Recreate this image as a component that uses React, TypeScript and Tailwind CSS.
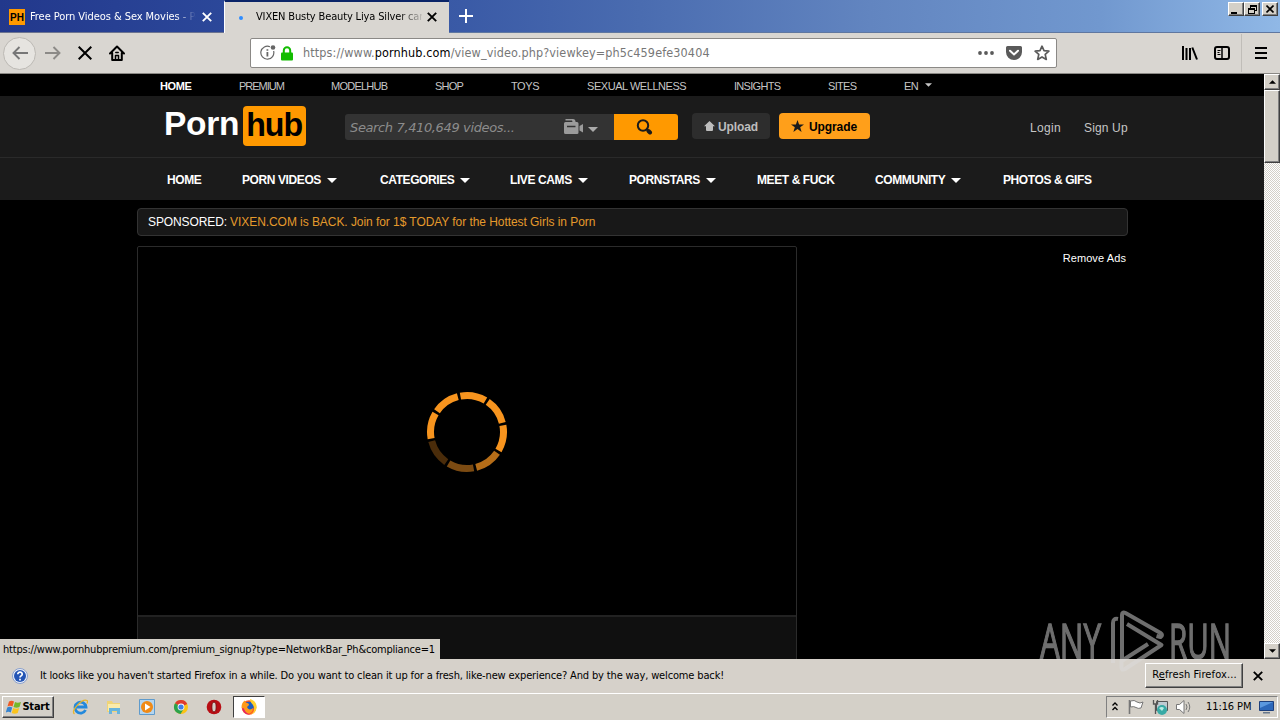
import { ReactNode } from 'react'

const TAHOMA = 'font-["DejaVu_Sans_Condensed","DejaVu_Sans",sans-serif]'

const networkLinks = [
  { label: 'HOME', width: 'w-[79px]', text: 'font-bold text-white tracking-[-0.35px]' },
  { label: 'PREMIUM', width: 'w-[92px]', text: 'tracking-[-1px]' },
  { label: 'MODELHUB', width: 'w-[104px]', text: 'tracking-[-0.75px]' },
  { label: 'SHOP', width: 'w-[76px]', text: 'tracking-[-0.8px]' },
  { label: 'TOYS', width: 'w-[76px]', text: 'tracking-[-0.4px]' },
  { label: 'SEXUAL WELLNESS', width: 'w-[147px]', text: 'tracking-[-0.45px]' },
  { label: 'INSIGHTS', width: 'w-[94px]', text: 'tracking-[-0.7px]' },
  { label: 'SITES', width: 'w-[76px]', text: 'tracking-[-0.7px]' },
]

const menuLinks = [
  { label: 'HOME', width: 'w-[75px]', arrow: false },
  { label: 'PORN VIDEOS', width: 'w-[138px]', arrow: true },
  { label: 'CATEGORIES', width: 'w-[130px]', arrow: true },
  { label: 'LIVE CAMS', width: 'w-[119px]', arrow: true },
  { label: 'PORNSTARS', width: 'w-[128px]', arrow: true },
  { label: 'MEET & FUCK', width: 'w-[118px]', arrow: false },
  { label: 'COMMUNITY', width: 'w-[128px]', arrow: true },
  { label: 'PHOTOS & GIFS', width: 'w-[120px]', arrow: false },
]

// clockwise from the top segment
const spinnerSegments = ['#f7941e', '#f7941e', '#f7941e', '#b56d18', '#7c4b12', '#4a2c0a', '#f7941e', '#f7941e']

function Caret({ className }: { className: string }) {
  return (
    <svg viewBox="0 0 10 5" className={className}>
      <path d="M0 0h10L5 5z" fill="currentColor" />
    </svg>
  )
}

function CloseIcon({ className }: { className: string }) {
  return (
    <svg viewBox="0 0 10 10" className={className} fill="none" stroke="currentColor" strokeWidth="1.9">
      <path d="M.8.8l8.4 8.4M9.2.8L.8 9.2" />
    </svg>
  )
}

function WinButton({ children, className = '' }: { children: ReactNode; className?: string }) {
  return (
    <div
      className={`flex items-center justify-center bg-[#d4d0c8] border border-t-white border-l-white border-r-[#404040] border-b-[#404040] shadow-[inset_-1px_-1px_0_#808080] ${className}`}
    >
      {children}
    </div>
  )
}

function TabBar() {
  return (
    <div className="flex h-[33px] bg-[linear-gradient(90deg,#22388c_0%,#2c489a_18%,#3a5aa6_36%,#4a6cb0_50%,#6285c0_68%,#7198cf_86%,#90b8e6_100%)]">
      <div className="flex w-[224px] items-center border-b border-[#6b7390] pt-[2px] pl-[9px] text-white">
        <div className="flex h-4 w-4 items-center justify-center bg-[#ff9900] font-['Liberation_Sans',sans-serif] text-[10px] font-bold text-black">
          PH
        </div>
        <div className="ml-[5px] w-[166px] overflow-hidden whitespace-nowrap text-[11px] tracking-[-0.06px] [mask-image:linear-gradient(90deg,black_88%,transparent_100%)]">
          Free Porn Videos &amp; Sex Movies - Pornhub
        </div>
        <CloseIcon className="ml-[6px] h-[10px] w-[10px]" />
      </div>
      <div className="flex w-[225px] items-center border-t-2 border-l border-t-[#0a2468] border-l-white bg-[#d9d6d1] text-black">
        <div className="ml-[14px] h-1 w-1 rounded-full bg-[#2f8cff]" />
        <div className="ml-[13px] w-[166px] overflow-hidden whitespace-nowrap text-[11px] tracking-[-0.15px] [mask-image:linear-gradient(90deg,black_86%,transparent_102%)]">
          VIXEN Busty Beauty Liya Silver can't get enough
        </div>
        <CloseIcon className="mb-[2px] ml-[5px] h-[10px] w-[10px]" />
      </div>
      <div className="flex flex-1 justify-between border-b border-[#5f77a0]">
        <svg viewBox="0 0 14 14" className="mt-[9px] ml-[10px] h-[14px] w-[14px]" stroke="white" strokeWidth="2">
          <path d="M7 0v14M0 7h14" />
        </svg>
        <div className="mt-[2px] mr-[2px] flex h-[14px]">
          <WinButton className="w-4">
            <div className="mt-[7px] mr-1 h-[2px] w-[6px] bg-black" />
          </WinButton>
          <WinButton className="w-4">
            <svg viewBox="0 0 9 9" className="h-[9px] w-[9px]" fill="none" stroke="black" shapeRendering="crispEdges">
              <path d="M2.5 3.5v-3h6v5h-2M2 1h7M.5 3.5h6v5h-6zM0 4h7" />
            </svg>
          </WinButton>
          <WinButton className="ml-[2px] w-4">
            <svg viewBox="0 0 8 8" className="h-2 w-2" stroke="black" strokeWidth="1.6">
              <path d="M.5.5l7 7M7.5.5l-7 7" />
            </svg>
          </WinButton>
        </div>
      </div>
    </div>
  )
}

function Toolbar() {
  return (
    <div className="flex h-[41px] items-center border-b border-[#8a8884] bg-[#d9d6d1]">
      <div className="ml-[3px] flex h-[33px] w-[33px] items-center justify-center rounded-full border border-[#bcb9b4] bg-[#e6e4e0] text-[#777]">
        <svg viewBox="0 0 16 14" className="h-[14px] w-4" fill="none" stroke="currentColor" strokeWidth="1.9">
          <path d="M16 7H1.5M7.5 1L1.5 7l6 6" />
        </svg>
      </div>
      <svg viewBox="0 0 16 14" className="ml-[9px] h-[14px] w-4 text-[#8c8a87]" fill="none" stroke="currentColor" strokeWidth="1.9">
        <path d="M0 7h14.5M8.500 1l6 6-6 6" />
      </svg>
      <svg viewBox="0 0 14 14" className="ml-[17px] h-[14px] w-[14px]" stroke="black" strokeWidth="2">
        <path d="M.7.7l12.600 12.600M13.300.7L.7 13.300" />
      </svg>
      <svg viewBox="0 0 16 16" className="ml-[17px] h-4 w-4" fill="none" stroke="black" strokeWidth="2" strokeLinejoin="round" strokeLinecap="round">
        <path d="M1 8.500L8 1.500l7 7M3.200 8v7h9.600V8" />
        <path d="M6.500 15v-4.500h3V15zM6.800 7.500h2.400" strokeWidth="1.500" />
      </svg>
      <div className="ml-[125px] flex h-[30px] w-[807px] items-center rounded-[2px] border border-[#8b8986] bg-white">
        <svg viewBox="0 0 16 16" className="ml-[9px] h-4 w-4" fill="none" stroke="#666" strokeWidth="1.200">
          <path d="M10 1.800A6.500 6.500 0 1 0 13.600 6" />
          <path d="M7.400 7v4.500M7.400 4.200v1.500" strokeWidth="1.800" />
          <circle cx="13" cy="2.500" r="2.300" fill="#666" stroke="none" />
        </svg>
        <svg viewBox="0 0 12 15" className="ml-[5px] h-[15px] w-3">
          <path d="M2.800 7V4.500a3.200 3.200 0 0 1 6.400 0V7" fill="none" stroke="#12bc00" strokeWidth="2" />
          <rect y="6.500" width="12" height="8" rx="1" fill="#12bc00" />
        </svg>
        <div className="ml-[10px] w-[660px] pt-px whitespace-nowrap text-[12.5px] tracking-[0.12px] text-[#777]">
          https://www.<span className="text-black">pornhub.com</span>/view_video.php?viewkey=ph5c459efe30404
        </div>
        <svg viewBox="0 0 16 4" className="ml-[15px] h-1 w-4 shrink-0" fill="#5a5a5a">
          <circle cx="2" cy="2" r="1.900" />
          <circle cx="8" cy="2" r="1.900" />
          <circle cx="14" cy="2" r="1.900" />
        </svg>
        <svg viewBox="0 0 16 14" className="ml-3 h-[14px] w-4 shrink-0">
          <path d="M1.500 0h13A1.500 1.500 0 0 1 16 1.500V6A8 8 0 0 1 0 6V1.500A1.500 1.500 0 0 1 1.500 0z" fill="#5a5a5a" />
          <path d="M4 4.800l4 3.700 4-3.700" fill="none" stroke="white" strokeWidth="2" strokeLinecap="round" />
        </svg>
        <svg viewBox="0 0 16 16" className="ml-3 h-4 w-4 shrink-0" fill="none" stroke="#5a5a5a" strokeWidth="1.700" strokeLinejoin="round">
          <path d="M8 1.200l2 4.500 4.900.5-3.700 3.200 1.100 5L8 11.900l-4.300 2.500 1.100-5L1.100 6.200 6 5.700z" />
        </svg>
      </div>
      <svg viewBox="0 0 16 14" className="ml-[125px] h-[14px] w-4" stroke="black" strokeWidth="2">
        <path d="M1 0v14M4.500 2v12M8 2v12M10.300 1.500l4.700 12" />
      </svg>
      <svg viewBox="0 0 16 14" className="ml-4 h-[14px] w-4" fill="none" stroke="black" strokeWidth="2">
        <rect x="1" y="1" width="14" height="12" rx="2" />
        <path d="M8 1v12" strokeWidth="1.500" />
        <path d="M3.500 4.500h3M3.500 6.500h2M3.500 8.500h3" strokeWidth="1" />
      </svg>
      <div className="ml-[11px] h-[38px] w-px bg-[#c0bdb8]" />
      <svg viewBox="0 0 12 12" className="ml-[13px] h-3 w-3" stroke="black" strokeWidth="2">
        <path d="M0 1h12M0 6h12M0 11h12" />
      </svg>
    </div>
  )
}

function SiteHeader() {
  return (
    <div>
      <div className="flex h-[22px] items-center bg-black pt-[2px] pl-[160px] text-[11px] text-[#c6c6c6]">
        {networkLinks.map((link) => (
          <div key={link.label} className={`shrink-0 whitespace-nowrap ${link.width} ${link.text}`}>
            {link.label}
          </div>
        ))}
        <span className="tracking-[-0.5px]">EN</span>
        <Caret className="mb-[2px] ml-[7px] h-1 w-[7px]" />
      </div>

      <div className="flex h-[62px] items-start border-b border-[#2a2a2a] bg-[#1b1b1b] pl-[164px]">
        <div className="mt-[10px] flex h-10 items-center">
          <div className="w-[79px] text-[33.500px] leading-10 font-bold tracking-[-0.3px] text-white">
            <span className="inline-block origin-left -translate-y-[2px] scale-x-[1]">Porn</span>
          </div>
          <div className="flex h-10 w-[63px] items-center justify-center rounded-[4px] bg-[#ff9900] text-[33.500px] font-bold tracking-[-1px] text-black">
            <span className="inline-block -translate-y-px scale-x-[0.96]">hub</span>
          </div>
        </div>
        <div className="mt-[18px] ml-[39px] flex h-[26px] w-[333px]">
          <div className="flex w-[269px] items-center rounded-l-[3px] bg-[#333] text-[#8c8c8c]">
            <div className='w-[219px] pt-px pl-[5px] font-["DejaVu_Sans","DejaVu_Sans_Condensed",sans-serif] text-[13px] font-extralight italic tracking-[-0.37px]'>
              Search 7,410,649 videos...
            </div>
            <svg viewBox="0 0 20 16" className="h-4 w-5 text-[#9b9b9b]" fill="currentColor">
              <path d="M1.500 0H9q2 0 2.500 2v1H13a1.500 1.500 0 0 1 1.500 1.500v9A1.500 1.500 0 0 1 13 15H1.500A1.500 1.500 0 0 1 0 13.500v-9A1.500 1.500 0 0 1 1.500 3H8.500L8 1.500H1.500zM15.500 7l3.500-2v8.500l-3.500-2z" />
              <path d="M3 7.500h8.500" stroke="#333" strokeWidth="1.500" />
            </svg>
            <Caret className="mt-1 ml-[4px] h-[5px] w-[10px] text-[#aaa]" />
          </div>
          <div className="flex w-16 items-center justify-center rounded-r-[3px] bg-[#ff9900]">
            <svg viewBox="0 0 17 16" className="h-4 w-[17px] -translate-x-[2px]" fill="none" stroke="#1b1b1b">
              <circle cx="7" cy="6.500" r="5.200" strokeWidth="2" />
              <path d="M10.500 10l1.500 1.500" strokeWidth="2" />
              <path d="M12.500 12l1.500 1.500" strokeWidth="4" strokeLinecap="round" />
            </svg>
          </div>
        </div>
        <div className="mt-[17px] ml-[14px] flex h-[26px] w-[78px] items-center rounded-[4px] bg-[#2d2d2d] pl-3 text-[12px] font-bold text-[#bdbdbd]">
          <svg viewBox="0 0 11 10" className="mr-[3px] h-[10px] w-[11px]" fill="currentColor">
            <path d="M5.500 0L11 5.200H9V9a1 1 0 0 1-1 1H3a1 1 0 0 1-1-1V5.200H0z" />
          </svg>
          <span className="pt-px tracking-[-0.1px]">Upload</span>
        </div>
        <div className="mt-[17px] ml-[9px] flex h-[26px] w-[91px] items-center rounded-[4px] bg-[#ff9f1a] pl-3 text-[12px] font-bold text-black">
          <svg viewBox="0 0 13 12" className="mr-[5px] h-3 w-[13px]" fill="#1b1b1b">
            <path d="M6.500 0l1.600 4.400H13L9.200 7.200l1.400 4.800-4.100-2.900L2.400 12l1.400-4.800L0 4.400h4.900z" />
          </svg>
          <span className="pt-px tracking-[-0.1px]">Upgrade</span>
        </div>
        <div className="mt-[22px] ml-[160px] flex text-[12px] leading-5 text-[#c6c6c6]">
          <div className="w-[54px] tracking-[0.3px]">Login</div>
          <div className="whitespace-nowrap tracking-[0.15px]">Sign Up</div>
        </div>
      </div>

      <div className="flex h-[42px] items-center bg-[#1b1b1b] pt-[2px] pl-[167px] text-[12px] font-bold text-white">
        {menuLinks.map((link) => (
          <div key={link.label} className={`flex shrink-0 items-center whitespace-nowrap tracking-[-0.4px] ${link.width}`}>
            {link.label}
            {link.arrow && <Caret className="ml-[6px] h-[5px] w-[10px]" />}
          </div>
        ))}
      </div>
    </div>
  )
}

function Spinner() {
  return (
    <svg viewBox="-41 -41 82 82" className="h-[82px] w-[82px] translate-y-px" fill="none" strokeWidth="7">
      {spinnerSegments.map((color, i) => (
        <path key={i} d="M-12.700 -34.200A36.500 36.500 0 0 1 12.700 -34.200" stroke={color} transform={`rotate(${i * 45 + 10})`} />
      ))}
    </svg>
  )
}

function AnyRun() {
  return (
    <div className="pointer-events-none absolute top-[609px] left-[1039px] opacity-50">
      <svg viewBox="0 0 192 64" className="h-16 w-48" fill="none" stroke="#dcdcdc">
        <g fill="#dcdcdc" strokeWidth="1.400" fontFamily="'Open Sans', 'Liberation Sans', sans-serif" fontSize="50">
          <text x="1" y="50" textLength="61" lengthAdjust="spacingAndGlyphs">ANY</text>
          <text x="130" y="50" textLength="62" lengthAdjust="spacingAndGlyphs">RUN</text>
        </g>
        <g strokeWidth="4" strokeLinejoin="round">
          <path d="M83 52V6q0-3.500 3.500-2l35 20q3 2 0 4l-4-1" />
          <path d="M88 15l34.500 21L86 60q-4 2-3.500-2.500V52L109 35" />
          <path d="M79 10q-5-1-5 4v40" />
        </g>
      </svg>
    </div>
  )
}

function Scrollbar() {
  return (
    <div className="flex w-4 flex-col bg-[repeating-conic-gradient(#fff_0_25%,#d4d0c8_0_50%)] bg-[length:2px_2px]">
      <WinButton className="h-4">
        <Caret className="h-1 w-[7px] rotate-180" />
      </WinButton>
      <WinButton className="h-[73px]">{null}</WinButton>
      <WinButton className="mt-auto h-4">
        <Caret className="h-1 w-[7px]" />
      </WinButton>
    </div>
  )
}

function NotificationBar() {
  return (
    <div className="flex h-[34px] items-center bg-[#d6d1ca] text-[11px] text-black">
      <svg viewBox="0 0 16 16" className="ml-3 h-4 w-4">
        <circle cx="8" cy="8" r="7.500" fill="#e9eef8" stroke="#8aa0cc" />
        <circle cx="8" cy="8" r="6" fill="#2455b5" />
        <path d="M5.800 6.300c0-3 4.500-2.800 4.400 0C10.200 8 8 7.800 8 9.500M8 10.800v1.700" fill="none" stroke="white" strokeWidth="1.700" />
      </svg>
      <div className="ml-[12px] w-[1105px] pt-px whitespace-nowrap tracking-[-0.145px]">
        It looks like you haven't started Firefox in a while. Do you want to clean it up for a fresh, like-new experience? And by the way, welcome back!
      </div>
      <WinButton className="mb-[2px] h-[25px] w-[98px] shrink-0">
        <span className="whitespace-nowrap pl-px tracking-[0.1px]">
          R<u>e</u>fresh Firefox...
        </span>
      </WinButton>
      <CloseIcon className="ml-[10px] h-[10px] w-[10px]" />
    </div>
  )
}

function FirefoxIcon() {
  return (
    <svg viewBox="0 0 16 16" className="h-4 w-4">
      <circle cx="8" cy="8.500" r="7.300" fill="#ff5a1f" />
      <circle cx="8" cy="7.500" r="4.800" fill="#1c5ec4" />
      <path d="M1 5c1-2 2-3 2.500-3.500L5 4c2 0 3 .5 3 2L6 8c1 3 4 3 6 1 0 4-3 6-6 5.500C2 14 0 9 1 5z" fill="#ff9a1a" />
      <path d="M9 0c4 1 7 4 6.500 9-.5 4-3 6-6 6.500 3-2 4-4 3.500-7C12.500 5 9 4 9 0z" fill="#ffd22e" />
      <path d="M1 9c1 5 5 7 9 6.500-3-.5-6-2-7-6z" fill="#e3206c" />
    </svg>
  )
}

function Taskbar() {
  return (
    <div className="flex h-[27px] items-center border-t border-white bg-[#d4d0c8] text-[11px] text-black">
      <WinButton className="ml-[2px] h-[22px] w-[52px]">
        <svg viewBox="0 0 16 14" className="h-[14px] w-4 shrink-0">
          <path d="M3 1.500q2.500-1.500 5 0L6.500 6.500q-2.500-1.300-5 0z" fill="#ef5a23" />
          <path d="M9 2q2.500 1.300 6 0l-1.500 5q-3 1.300-6 0z" fill="#76b82a" />
          <path d="M1.200 7.500q2.500-1.300 5 0L4.800 12.500q-2.500-1.300-5 0z" fill="#3684d0" />
          <path d="M7.200 8q3 1.300 6 0l-1.500 5q-3 1.300-6 0z" fill="#fbc41d" />
        </svg>
        <span className="text-[11px] font-bold tracking-[-0.2px]">Start</span>
      </WinButton>
      <div className="ml-[18px] flex items-center gap-[17.5px]">
        <svg viewBox="0 0 16 16" className="h-4 w-4" fill="none">
          <path d="M13.500 11A5.500 5.500 0 1 1 14 8H4" stroke="#2389dc" strokeWidth="2.800" />
          <path d="M2.500 15C-2 12 10-.5 15 1.500q1 .5 0 3" stroke="#e6b52c" strokeWidth="1.300" />
        </svg>
        <svg viewBox="0 0 16 16" className="h-4 w-4">
          <path d="M1 2h5l1 2h7v9H1z" fill="#efd477" />
          <path d="M2 5h12v7H2z" fill="#f9ebab" />
          <path d="M3 9h11v6h-3v-3H6v3H3z" fill="#67b4dc" />
        </svg>
        <svg viewBox="0 0 16 16" className="h-4 w-4">
          <path d="M.5.5h15v15H.5z" fill="#b4d5ef" stroke="#5f9bcc" />
          <circle cx="8" cy="8" r="6" fill="#f08a16" />
          <path d="M6 4.500v7L11.500 8z" fill="white" />
        </svg>
        <svg viewBox="0 0 16 16" className="h-4 w-4">
          <circle cx="8" cy="8" r="7" fill="#fbc316" />
          <path d="M8 8L2 4.300a7 7 0 0 1 12.200.7z" fill="#df3b30" />
          <path d="M8 8L2 4.300A7 7 0 0 0 7.500 15L11 9.500z" fill="#2ba24c" />
          <circle cx="8" cy="8" r="3.400" fill="white" />
          <circle cx="8" cy="8" r="2.600" fill="#3f7fe8" />
        </svg>
        <svg viewBox="0 0 16 16" className="h-4 w-4">
          <circle cx="8" cy="8" r="7.300" fill="#b80e14" />
          <ellipse cx="8" cy="8" rx="2.200" ry="5" fill="#d4d0c8" stroke="#7d080c" />
        </svg>
      </div>
      <div className="ml-[11px] flex h-[22px] w-8 items-center justify-center border border-t-[#404040] border-l-[#404040] border-r-white border-b-white bg-white">
        <FirefoxIcon />
      </div>
      <div className="mr-[2px] ml-auto flex h-[22px] w-[172px] items-center border border-t-[#808080] border-l-[#808080] border-r-white border-b-white">
        <svg viewBox="0 0 6 9" className="mb-[2px] ml-[5px] h-[9px] w-[6px]" fill="none" stroke="black" strokeWidth="1.300">
          <path d="M.5 3.500L3 1l2.500 2.500M.5 8L3 5.500 5.500 8" />
        </svg>
        <svg viewBox="0 0 16 16" className="ml-[10px] h-4 w-4" fill="white" stroke="#777">
          <path d="M2.500 2q4-1.500 6.500 1 3 2 6 0l-2 6q-3 1-5-.5-2-1.500-5.500-.5z" />
          <path d="M1.500 1v14" strokeWidth="1.600" />
        </svg>
        <svg viewBox="0 0 16 16" className="ml-2 h-4 w-4">
          <path d="M4.500 2.500h11v9h-11z" fill="#bfcbd2" stroke="#555" />
          <path d="M1.500 1v4h4V1M3.500 5v10" fill="none" stroke="#555" strokeWidth="1.300" />
          <circle cx="10" cy="11" r="5" fill="#38aaa5" />
          <path d="M7 9q3-2 5 0l-2 3z" fill="#b9ece4" />
        </svg>
        <svg viewBox="0 0 16 16" className="ml-2 h-4 w-4" fill="none" stroke="#777">
          <path d="M.5 5.500h3L8 1.500v13L3.500 10.500h-3z" fill="white" />
          <path d="M10 5q2 3 0 6M12 3q3.500 5 0 10" />
        </svg>
        <span className="ml-[14px] w-[46px] pt-px whitespace-nowrap tracking-[-0.1px]">11:16 PM</span>
        <svg viewBox="0 0 15 13" className="ml-[7px] h-[13px] w-[15px] shrink-0">
          <path d="M.5.500h14v9H.5z" fill="#2c68ba" stroke="#1c3f7c" />
          <path d="M1 1h13L1 7z" fill="#5a98df" />
          <path d="M4 11h7v1.500H4z" fill="#68788c" />
        </svg>
      </div>
    </div>
  )
}

export default function App() {
  return (
    <div className={`relative flex h-[720px] w-[1280px] flex-col overflow-hidden bg-black ${TAHOMA}`}>
      <TabBar />
      <Toolbar />
      <div className="flex h-[585px]">
        <div className="w-[1264px] overflow-hidden font-['Liberation_Sans',Arial,sans-serif]">
          <SiteHeader />
          <div className="mt-2 ml-[137px] w-[991px]">
            <div className="flex h-7 items-center rounded-[4px] border border-[#333] bg-[#181818] pl-[10px] text-[12px] text-white">
              <span className="tracking-[-0.1px]">SPONSORED:</span>
              <span className="ml-[3px] tracking-[-0.06px] text-[#e59a2c]">
                VIXEN.COM is BACK. Join for 1$ TODAY for the Hottest Girls in Porn
              </span>
            </div>
            <div className="mt-[10px] flex justify-between">
              <div className="w-[660px] rounded-t-[2px] border border-[#2b2b2b]">
                <div className="flex h-[368px] items-center justify-center">
                  <Spinner />
                </div>
                <div className="h-[50px] border-t-2 border-[#222] bg-[#101010]" />
              </div>
              <div className="mt-1 mr-[2px] text-[11px] tracking-[0.1px] text-white">Remove Ads</div>
            </div>
          </div>
        </div>
        <Scrollbar />
      </div>
      <NotificationBar />
      <Taskbar />
      <div className="absolute top-[639px] left-0 flex h-5 w-[440px] items-center bg-[#d4d0c8] pt-[3px] pl-[3px] text-[11px] tracking-[-0.21px] whitespace-nowrap">
        https://www.pornhubpremium.com/premium_signup?type=NetworkBar_Ph&amp;compliance=1
      </div>
      <AnyRun />
    </div>
  )
}
